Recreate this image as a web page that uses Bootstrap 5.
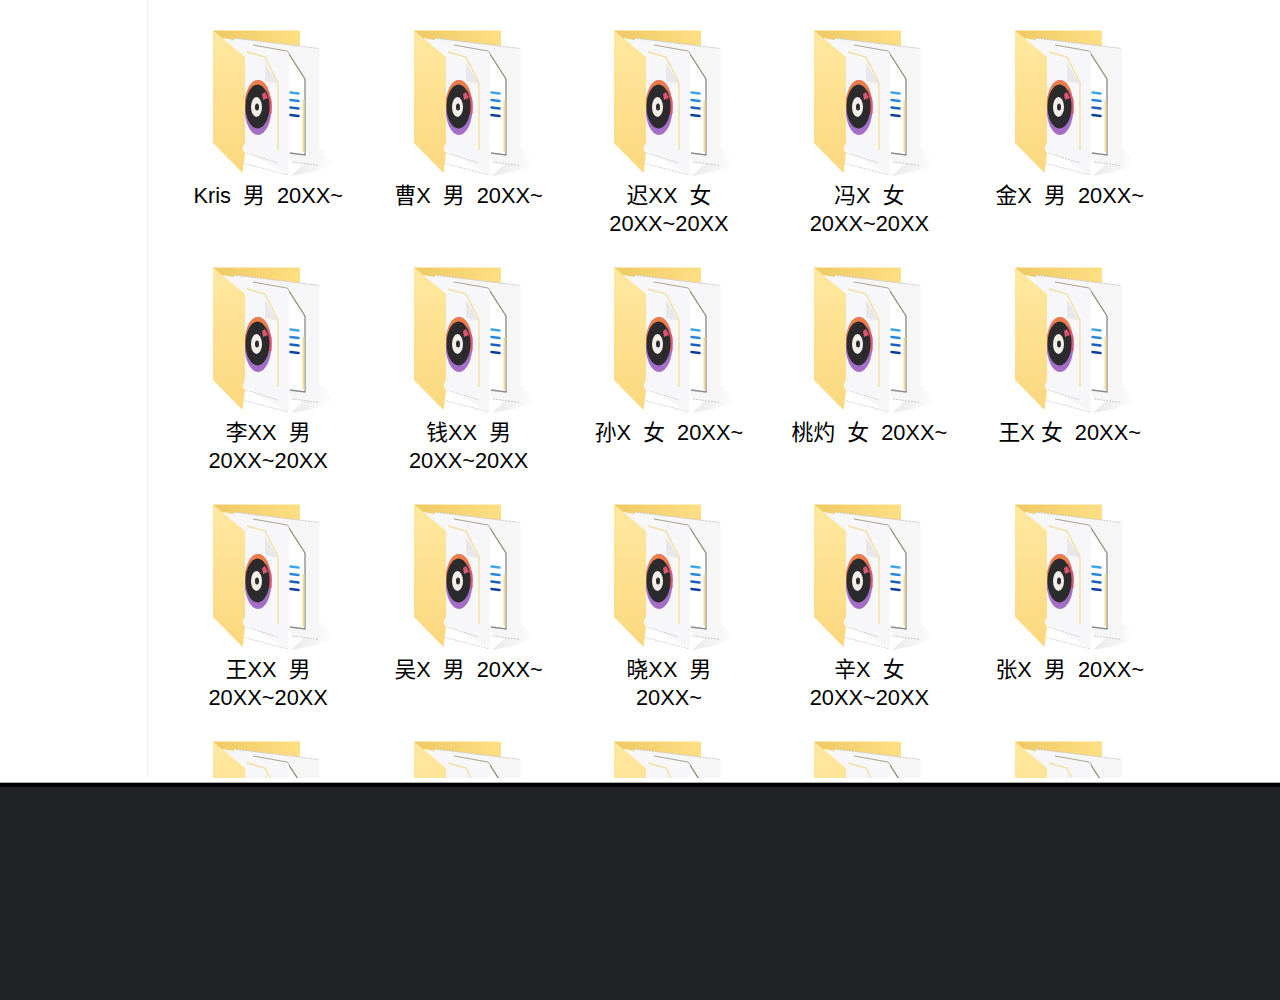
<!DOCTYPE html>
<html lang="zh-CN">
<head>
<meta charset="UTF-8">
<meta name="viewport" content="width=device-width, initial-scale=1.0">
<title>文件夹</title>
<link href="https://cdn.jsdelivr.net/npm/bootstrap@5.3.3/dist/css/bootstrap.min.css" rel="stylesheet">
<style>
  html, body { height: 1000px; overflow: hidden; background: #fff; }
  .shot-area { height: 778px; overflow: hidden; }
  .side-strip { width: 148px; border-right: 1px solid #f0f0f0; flex: none; }
  .folder-grid {
    display: grid;
    grid-template-columns: repeat(5, 200.4px);
    grid-auto-rows: 237px;
    padding: 30px 0 0 20px;
  }
  .folder-item { display: flex; flex-direction: column; align-items: center; }
  .folder-icon { width: 122px; height: 146px; margin-left: 12px; flex: none; display: block; filter: blur(.4px); }
  .folder-name {
    font-family: "Liberation Sans", "Noto Sans CJK SC", sans-serif;
    font-size: 21.8px;
    line-height: 28px;
    color: #000;
    text-align: center;
    white-space: pre-wrap;
    margin-top: 6px;
    width: 190px;
  }
  .gap-strip { height: 5px; border-bottom: 1px solid #aaa; }
  .bottom-bar { height: 217px; background: #202123; border-top: 4px solid #000; }
</style>
</head>
<body>
<svg width="0" height="0" class="d-block">
  <defs>
    <linearGradient id="backGrad" x1="0" y1="0" x2="1" y2="0">
      <stop offset="0" stop-color="#eec963"/><stop offset="1" stop-color="#ffdf84"/>
    </linearGradient>
    <linearGradient id="flapGrad" x1="0" y1="0" x2="0" y2="1">
      <stop offset="0" stop-color="#ffe8a0"/><stop offset="1" stop-color="#fbd87f"/>
    </linearGradient>
    <linearGradient id="shadowGrad" x1="0" y1="0" x2="1" y2="0">
      <stop offset="0" stop-color="#d6d6d6"/><stop offset="1" stop-color="#fff"/>
    </linearGradient>
    <symbol id="folderDoc" viewBox="0 0 122 146">
      <path d="M0 .5H87V40H0Z" fill="url(#backGrad)"/>
      <path d="M107 118 122 134 100 142 78 146Z" fill="url(#shadowGrad)" opacity=".55"/>
      <!-- back sheet -->
      <path d="M20 8 106.500 18.500V135.500L79 132Z" fill="#f6f6f7"/>
      <path d="M20 8 106.500 18.500" fill="none" stroke="#c8c8c8" stroke-dasharray="2 1"/>
      <path d="M79 132 106 135.500" fill="none" stroke="#c8c8c8" stroke-dasharray="2 1"/>
      <!-- middle sheet -->
      <path d="M34 14 74 21 92 49V125L77 123Z" fill="#fff"/>
      <path d="M74 21 92 49" fill="none" stroke="#8f8a70" stroke-width="1.300"/>
      <path d="M92 49V125L77 123" fill="none" stroke="#8a8a8a" stroke-width="1.300"/>
      <path d="M89.500 70 91.500 70V123L89.500 122Z" fill="#f3dc9a"/>
      <!-- blue lines -->
      <g fill="none" stroke-width="2.600" stroke-linecap="round">
        <path d="M77.500 62.500 85.500 63.500" stroke="#3fa6ec"/>
        <path d="M77.500 70 85.500 71" stroke="#2a86dc"/>
        <path d="M77.500 77.500 85.500 78.500" stroke="#1c5fbe"/>
        <path d="M77.500 85 85.500 86" stroke="#0e3f9e"/>
      </g>
      <!-- front sheet -->
      <path d="M10 8 74 21 76 24 75.500 145 28 118Z" fill="#f7f7f9"/>
      <path d="M29 133 75.500 145" fill="none" stroke="#d2d2d2" stroke-dasharray="2 1"/>
      <path d="M30 122 65 133" fill="none" stroke="#cfcfcf" stroke-dasharray="2 1"/>
      <path d="M40 15 74 21" fill="none" stroke="#a8a48e"/>
      <path d="M34 22 52 27 65 53V120" fill="none" stroke="#f3dfa2" stroke-width="1.400"/>
      <path d="M52 33V51L65 54Z" fill="#e8e8ea"/>
      <!-- disc -->
      <ellipse cx="45" cy="77.500" rx="13.500" ry="27.500" fill="#a56ec6"/>
      <path d="M31.500 77.500A13.500 27.500 0 0 1 58.500 77.500H50Z" fill="#ee7d48"/>
      <path d="M53 58 58.500 70V84H54Z" fill="#d8566f"/>
      <ellipse cx="44.500" cy="76.500" rx="12" ry="22" fill="#2b2a2d"/>
      <path d="M49 64 52 62 55 68 50 70Z" fill="#d8566f"/>
      <ellipse cx="43.500" cy="77" rx="5.500" ry="10" fill="#f3efe8"/>
      <ellipse cx="44" cy="77" rx="2" ry="3.600" fill="#2b2a2d"/>
      <!-- front flap -->
      <path d="M0 .5 32 27V113L29.500 118 32 124 29.500 143 0 113Z" fill="url(#flapGrad)"/>
    </symbol>
  </defs>
</svg>

<div class="shot-area d-flex">
  <div class="side-strip"></div>
  <div class="folder-grid flex-grow-1">
    <div class="folder-item"><svg class="folder-icon"><use href="#folderDoc"/></svg><div class="folder-name">Kris  男  20XX~</div></div>
    <div class="folder-item"><svg class="folder-icon"><use href="#folderDoc"/></svg><div class="folder-name">曹X  男  20XX~</div></div>
    <div class="folder-item"><svg class="folder-icon"><use href="#folderDoc"/></svg><div class="folder-name">迟XX  女
20XX~20XX</div></div>
    <div class="folder-item"><svg class="folder-icon"><use href="#folderDoc"/></svg><div class="folder-name">冯X  女
20XX~20XX</div></div>
    <div class="folder-item"><svg class="folder-icon"><use href="#folderDoc"/></svg><div class="folder-name">金X  男  20XX~</div></div>

    <div class="folder-item"><svg class="folder-icon"><use href="#folderDoc"/></svg><div class="folder-name">李XX  男
20XX~20XX</div></div>
    <div class="folder-item"><svg class="folder-icon"><use href="#folderDoc"/></svg><div class="folder-name">钱XX  男
20XX~20XX</div></div>
    <div class="folder-item"><svg class="folder-icon"><use href="#folderDoc"/></svg><div class="folder-name">孙X  女  20XX~</div></div>
    <div class="folder-item"><svg class="folder-icon"><use href="#folderDoc"/></svg><div class="folder-name">桃灼  女  20XX~</div></div>
    <div class="folder-item"><svg class="folder-icon"><use href="#folderDoc"/></svg><div class="folder-name">王X 女  20XX~</div></div>

    <div class="folder-item"><svg class="folder-icon"><use href="#folderDoc"/></svg><div class="folder-name">王XX  男
20XX~20XX</div></div>
    <div class="folder-item"><svg class="folder-icon"><use href="#folderDoc"/></svg><div class="folder-name">吴X  男  20XX~</div></div>
    <div class="folder-item"><svg class="folder-icon"><use href="#folderDoc"/></svg><div class="folder-name">晓XX  男
20XX~</div></div>
    <div class="folder-item"><svg class="folder-icon"><use href="#folderDoc"/></svg><div class="folder-name">辛X  女
20XX~20XX</div></div>
    <div class="folder-item"><svg class="folder-icon"><use href="#folderDoc"/></svg><div class="folder-name">张X  男  20XX~</div></div>

    <div class="folder-item"><svg class="folder-icon"><use href="#folderDoc"/></svg></div>
    <div class="folder-item"><svg class="folder-icon"><use href="#folderDoc"/></svg></div>
    <div class="folder-item"><svg class="folder-icon"><use href="#folderDoc"/></svg></div>
    <div class="folder-item"><svg class="folder-icon"><use href="#folderDoc"/></svg></div>
    <div class="folder-item"><svg class="folder-icon"><use href="#folderDoc"/></svg></div>
  </div>
</div>
<div class="gap-strip"></div>
<div class="bottom-bar"></div>
<script src="https://cdn.jsdelivr.net/npm/bootstrap@5.3.3/dist/js/bootstrap.bundle.min.js"></script>
</body>
</html>
